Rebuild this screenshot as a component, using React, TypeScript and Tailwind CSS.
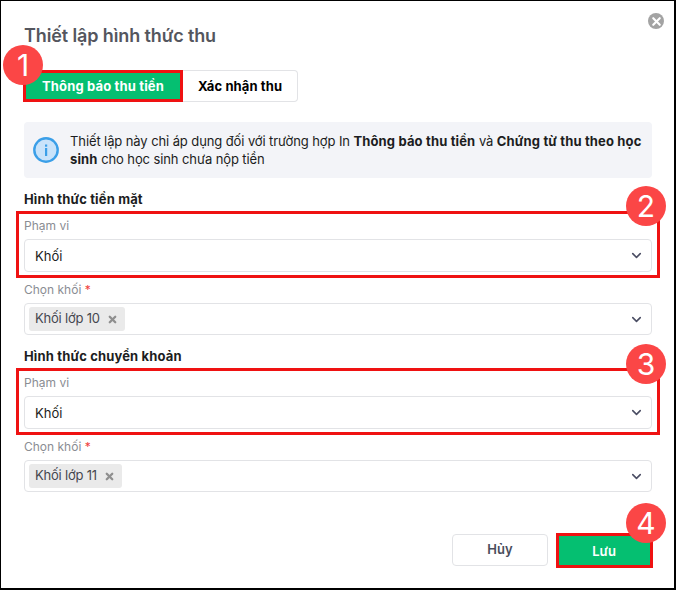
import { ChevronDown, X } from 'lucide-react'

const font = { fontFamily: 'Inter, "Noto Sans", sans-serif' }

function Marker({ n, className }: { n: number; className: string }) {
  return (
    <div
      className={`absolute w-10 h-10 rounded-full bg-[#fb4646] text-white flex items-center justify-center text-[30px] font-normal leading-none ${className}`}
    >
      {n}
    </div>
  )
}

function Field({ label, required, tall, children }: { label: string; required?: boolean; tall?: boolean; children: React.ReactNode }) {
  return (
    <div>
      <div className="h-[20px] text-[12px] leading-[20px] text-[#8a8d93]">
        {label}
        {required && <span className="text-[#f03d3d]"> *</span>}
      </div>
      <div className={`mt-[3px] ${tall ? 'h-[33px]' : 'h-[32px]'} rounded-[4px] border border-[#e2e3e6] bg-white flex items-center justify-between pl-[4px] pr-[7px]`}>
        {children}
        <ChevronDown className="w-[15px] h-[15px] text-[#4a4d63]" strokeWidth={2.5} />
      </div>
    </div>
  )
}

function Tag({ text }: { text: string }) {
  return (
    <div className="h-[24px] rounded-[3px] bg-[#eaeaea] flex items-center gap-[7px] pl-[6px] pr-[7px] text-[13px] tracking-[-0.2px] text-[#45474f]">
      {text}
      <X className="w-[11px] h-[11px] text-[#8f8f8f]" strokeWidth={5} />
    </div>
  )
}

function Section({ title, tag }: { title: string; tag: string }) {
  return (
    <div>
      <div className="h-[20px] text-[13px] leading-[20px] font-bold tracking-[0.15px] text-[#1c1d21]">{title}</div>
      <div className="mt-[7px] relative">
        <div className="absolute left-[-8px] right-[-8px] top-[-5px] h-[67px] border-[3px] border-[#ef1212] pointer-events-none" />
        <Field label="Phạm vi" tall>
          <span className="pl-[6px] pt-[2px] text-[13px] text-[#1c1d21]">Khối</span>
        </Field>
      </div>
      <div className="mt-[8px]">
        <Field label="Chọn khối" required>
          <Tag text={tag} />
        </Field>
      </div>
    </div>
  )
}

export default function App() {
  return (
    <div style={font} className="w-[676px] h-[590px] bg-white overflow-hidden">
      <div className="relative w-[676px] h-[590px] border border-r-2 border-b-2 border-black px-[23px] pt-[23px]">
        <div className="absolute right-[10px] top-[12px] w-4 h-4 rounded-full bg-[#a3a3a3] flex items-center justify-center">
          <X className="w-[13px] h-[13px] text-white" strokeWidth={4} />
        </div>

        <h1 className="text-[18px] leading-[24px] font-semibold tracking-[-0.12px] text-[#54565e]">Thiết lập hình thức thu</h1>

        <div className="mt-[22px] flex relative">
          <div className="w-[160px] h-[32px] ml-[-1px] pt-[2px] bg-[#05bf71] border-[3px] border-[#ef1212] flex items-center justify-center text-[13px] font-bold tracking-[0.15px] text-white">
            Thông báo thu tiền
          </div>
          <div className="w-[115px] h-[32px] pt-[2px] bg-white border border-l-0 border-[#e2e3e6] rounded-r-[4px] flex items-center justify-center text-[13px] font-bold tracking-[0.1px] text-black">
            Xác nhận thu
          </div>
          <Marker n={1} className="left-[-21px] top-[-25px]" />
        </div>

        <div className="mt-[20px] w-[628px] h-[56px] rounded-[4px] bg-[#f3f4f8] flex items-center pl-[9px] pr-[8px] gap-[11px]">
          <svg width="26" height="26" viewBox="0 0 26 26" className="shrink-0">
            <circle cx="13" cy="13" r="11.7" fill="#c9e3fa" stroke="#3b9fe8" strokeWidth="2.4" />
            <rect x="12" y="11" width="2.2" height="8" fill="#3b9fe8" />
            <rect x="12" y="7.5" width="2.2" height="2.2" fill="#3b9fe8" />
          </svg>
          <p className="text-[13px] leading-[18px] tracking-[-0.1px] text-[#1c1d21]">
            Thiết lập này chỉ áp dụng đối với trường hợp In{' '}
            <b className="tracking-[0.15px]">Thông báo thu tiền</b> và{' '}
            <b className="tracking-[0.15px]">Chứng từ thu theo học sinh</b> cho học sinh chưa nộp tiền
          </p>
        </div>

        <div className="mt-[11px] w-[628px] flex flex-col gap-[11px]">
          <Section title="Hình thức tiền mặt" tag="Khối lớp 10" />
          <Section title="Hình thức chuyển khoản" tag="Khối lớp 11" />
        </div>

        <div className="mt-[42px] w-[628px] flex justify-end gap-[8px]">
          <div className="w-[96px] h-[32px] rounded-[4px] border border-[#e2e3e6] flex items-center justify-center text-[13px] font-semibold text-[#4a4d5c]">
            Hủy
          </div>
          <div className="w-[97px] h-[35px] mt-[-1px] mr-[-1px] bg-[#05bf71] border-[3px] border-[#ef1212] flex items-center justify-center pr-[1px] pt-[2px] text-[13px] font-semibold text-white">
            Lưu
          </div>
        </div>

        <Marker n={2} className="left-[625px] top-[185px]" />
        <Marker n={3} className="left-[625px] top-[343px]" />
        <Marker n={4} className="left-[625px] top-[502px]" />
      </div>
    </div>
  )
}
